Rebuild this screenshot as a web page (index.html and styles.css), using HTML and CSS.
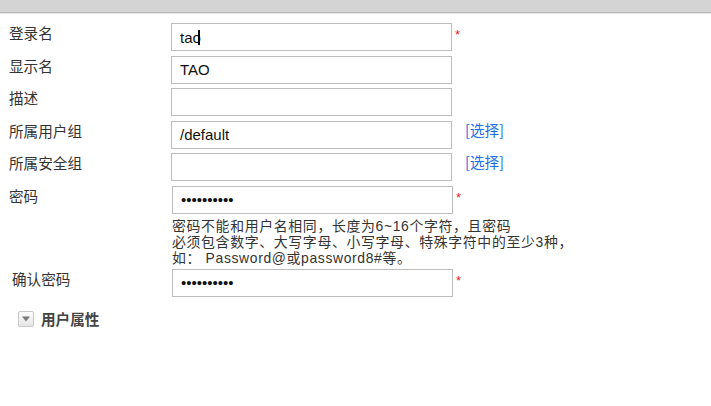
FILE: index.html
```html
<!DOCTYPE html>
<html lang="zh-CN">
<head>
<meta charset="utf-8">
<title>用户</title>
<link rel="stylesheet" href="styles.css">
</head>
<body>
<div class="topbar"></div>
<form class="form">
  <div class="row">
    <label class="label">登录名</label>
    <span class="field-wrap">
      <input class="field" type="text" value="tao">
      <span class="caret"></span>
    </span>
    <span class="req">*</span>
  </div>
  <div class="row">
    <label class="label">显示名</label>
    <input class="field" type="text" value="TAO">
  </div>
  <div class="row">
    <label class="label">描述</label>
    <input class="field" type="text" value="">
  </div>
  <div class="row">
    <label class="label">所属用户组</label>
    <input class="field" type="text" value="/default">
    <a class="pick">[选择]</a>
  </div>
  <div class="row">
    <label class="label">所属安全组</label>
    <input class="field" type="text" value="">
    <a class="pick">[选择]</a>
  </div>
  <div class="row row-shift">
    <label class="label">密码</label>
    <input class="field" type="password" value="1234567890">
    <span class="req">*</span>
  </div>
  <div class="hint">
    <div class="hint-line">密码不能和用户名相同，长度为6~16个字符，且密码</div>
    <div class="hint-line">必须包含数字、大写字母、小写字母、特殊字符中的至少3种，</div>
    <div class="hint-line">如： Password@或password8#等。</div>
  </div>
  <div class="row row-shift">
    <label class="label label-shift">确认密码</label>
    <input class="field" type="password" value="1234567890">
    <span class="req">*</span>
  </div>
  <div class="section">
    <span class="toggle">
      <svg width="10" height="6" viewBox="0 0 10 6"><path d="M1 0.5 L9 0.5 L5 5.5 Z" fill="#7a7a7a"/></svg>
    </span>
    <span class="section-title">用户属性</span>
  </div>
</form>
</body>
</html>
```

FILE: styles.css
```css
html, body {
  margin: 0;
  padding: 0;
  background: #fff;
}
body {
  font-family: "Liberation Sans", "Noto Sans CJK SC", sans-serif;
  color: #333;
}
.topbar {
  height: 12px;
  background: #d4d4d4;
  border-bottom: 1px solid #b9b9b9;
  box-shadow: 0 1px 0 #e6e6e6;
}
.form {
  padding-top: 10px;
}
.row {
  display: flex;
  align-items: flex-start;
  height: 28px;
  margin-bottom: 4.6px;
}
.label {
  box-sizing: border-box;
  width: 171px;
  padding-left: 9px;
  padding-top: 1px;
  font-family: "Noto Sans CJK SC", sans-serif;
  font-size: 14.6px;
  line-height: 18px;
  color: #333;
}
.row-shift .label {
  width: 172px;
}
.label-shift {
  padding-left: 12px;
}
.field-wrap {
  position: relative;
  display: block;
  height: 28px;
}
.field {
  box-sizing: border-box;
  width: 281px;
  height: 28px;
  margin: 0;
  padding: 0 8px;
  border: 1px solid #bcbcbc;
  border-radius: 0;
  outline: none;
  background: #fff;
  font-family: "Liberation Sans", sans-serif;
  font-size: 15px;
  color: #111;
}
.caret {
  position: absolute;
  left: 27px;
  top: 7px;
  width: 2px;
  height: 15px;
  background: #000;
}
.req {
  margin-left: 3px;
  margin-top: 6px;
  color: #f21b1b;
  font-family: "Liberation Sans", sans-serif;
  font-size: 13px;
  line-height: 12px;
}
.pick {
  margin-left: 13px;
  font-family: "Noto Sans CJK SC", sans-serif;
  font-size: 14.6px;
  line-height: 18px;
  color: #1a6fe3;
  cursor: pointer;
}
.hint {
  margin: -1px 0 3px 172px;
  font-family: "Liberation Sans", "Noto Sans CJK SC", sans-serif;
  font-size: 13.9px;
  letter-spacing: 0.65px;
  color: #333;
}
.hint-line {
  height: 16px;
  line-height: 16px;
  white-space: nowrap;
}
.section {
  display: flex;
  align-items: center;
  gap: 7px;
  margin-top: 13px;
  padding-left: 18px;
}
.toggle {
  box-sizing: border-box;
  display: flex;
  align-items: center;
  justify-content: center;
  width: 16px;
  height: 16px;
  border: 1px solid #c8c8c8;
  border-radius: 2px;
  background: linear-gradient(#fdfdfd, #e6e6e6);
}
.section-title {
  font-family: "Noto Sans CJK SC", sans-serif;
  font-size: 14.6px;
  font-weight: bold;
  color: #444;
  line-height: 18px;
}
```
